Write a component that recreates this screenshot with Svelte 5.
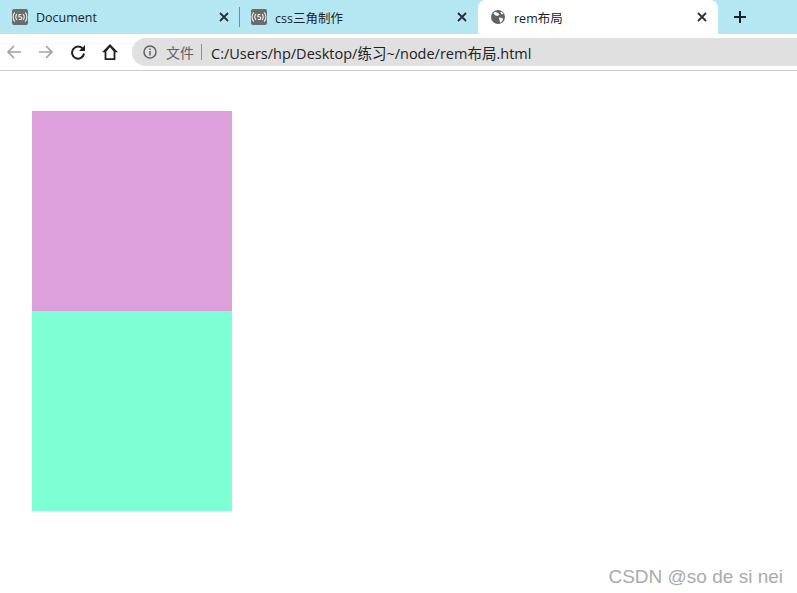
<script>
  const tabs = [
    { title: 'Document', icon: 'cast', active: false },
    { title: 'css三角制作', icon: 'cast', active: false },
    { title: 'rem布局', icon: 'globe', active: true }
  ];
</script>

<div class="browser">
  <div class="tabstrip">
    {#each tabs as tab, i}
      <div class="tab" class:active={tab.active} class:sep={i === 0}>
        {#if tab.icon === 'cast'}
          <svg class="favicon" width="16" height="16" viewBox="0 0 16 16">
            <rect width="16" height="16" rx="2" fill="#6b6b6b" />
            <g fill="none" stroke="#eee" stroke-width="1.100">
              <path d="M2.800 3.400a7 7 0 0 0 0 9.200M13.200 3.400a7 7 0 0 1 0 9.200" />
              <path d="M4.900 5.200a4.400 4.400 0 0 0 0 5.600M11.100 5.200a4.400 4.400 0 0 1 0 5.600" />
              <path d="M9.300 5.500H7.100L6.900 7.800H8.400a1.300 1.300 0 0 1 0 2.700H6.800" />
            </g>
          </svg>
        {:else}
          <svg class="favicon" width="16" height="16" viewBox="0 0 16 16">
            <circle cx="8" cy="8" r="7" fill="#5f6368" />
            <path d="M5 2.800l3 1.200 1.500 1.600-2 1.400-2-.4-2.200-2zM9 8.500l3.500.5.500 2-2.500 3-1-2.500zM11 2.500l2.500 2-1.500 1-1.500-1.500z" fill="#fff" />
          </svg>
        {/if}
        <span class="title">{tab.title}</span>
        <svg class="close" width="10" height="10" viewBox="0 0 10 10">
          <path d="M1 1l8 8M9 1l-8 8" stroke="#2b2e33" stroke-width="1.800" fill="none" />
        </svg>
      </div>
    {/each}
    <svg class="newtab" width="12" height="12" viewBox="0 0 12 12">
      <path d="M6 0v12M0 6h12" stroke="#202124" stroke-width="2" fill="none" />
    </svg>
  </div>

  <div class="toolbar">
    <svg class="nav" width="16" height="16" viewBox="0 0 16 16">
      <path d="M15 8H2M8 2L2 8l6 6" stroke="#a3a3a3" stroke-width="1.700" fill="none" />
    </svg>
    <svg class="nav" width="16" height="16" viewBox="0 0 16 16">
      <path d="M1 8h13M8 2l6 6-6 6" stroke="#a3a3a3" stroke-width="1.700" fill="none" />
    </svg>
    <svg class="nav" width="16" height="16" viewBox="0 0 16 16">
      <path d="M13 5.200A6 6 0 1 0 14 9.500" stroke="#202124" stroke-width="2" fill="none" />
      <path d="M15 1v6H9z" fill="#202124" />
    </svg>
    <svg class="nav" width="16" height="16" viewBox="0 0 16 16">
      <path d="M8 0L0 8.300h2.600V16h10.800V8.300H16zM4.400 14.200V7.500L8 3.300l3.600 4.200v6.700z" fill="#202124" fill-rule="evenodd" />
    </svg>
    <div class="omnibox">
      <svg class="info" width="14" height="14" viewBox="0 0 14 14">
        <circle cx="7" cy="7" r="6" fill="none" stroke="#5f6368" stroke-width="1.500" />
        <path d="M7 6v4.500M7 3.500v1.500" stroke="#5f6368" stroke-width="1.500" />
      </svg>
      <span class="scheme">文件</span>
      <span class="divider"></span>
      <span class="url">C:/Users/hp/Desktop/练习~/node/rem布局.html</span>
    </div>
  </div>

  <div class="page">
    <div class="box plum"></div>
    <div class="box aqua"></div>
  </div>

  <div class="watermark">CSDN @so de si nei</div>
</div>

<style>
  :global(body) {
    margin: 0;
    background: #fff;
  }

  .browser {
    position: relative;
    width: 797px;
    height: 593px;
    overflow: hidden;
    font-family: "Liberation Sans", "Noto Sans CJK SC", sans-serif;
  }

  .tabstrip {
    display: flex;
    align-items: stretch;
    height: 34px;
    background: #b5e7f3;
  }

  .tab {
    position: relative;
    display: flex;
    align-items: center;
    width: 238px;
    box-sizing: border-box;
    padding: 0 11px;
    font-size: 12.5px;
    color: #202124;
  }

  .tab.sep {
    width: 240px;
    padding-left: 12px;
  }

  .tab.sep::after {
    content: "";
    position: absolute;
    right: 0;
    top: 7px;
    height: 20px;
    width: 1px;
    background: #6f8f98;
  }

  .tab.active {
    width: 240px;
    padding-left: 12px;
    padding-right: 11px;
    background: #fff;
    border-radius: 8px 8px 0 0;
  }

  .favicon {
    flex: none;
  }

  .title {
    flex: 1;
    margin-left: 8px;
    white-space: nowrap;
    font-family: "Open Sans", "Noto Sans CJK SC", sans-serif;
  }

  .close {
    flex: none;
  }

  .newtab {
    margin: 11px 0 0 16px;
  }

  .toolbar {
    display: flex;
    align-items: center;
    height: 36px;
    border-bottom: 1px solid #cccccc;
    background: #fff;
  }

  .nav {
    flex: none;
    margin-left: 6px;
    margin-right: 10px;
  }

  .omnibox {
    flex: 1;
    display: flex;
    align-items: center;
    height: 28px;
    margin-left: 4px;
    padding-left: 11px;
    background: #e0e0e0;
    border-radius: 14px 0 0 14px;
    font-size: 14px;
  }

  .scheme {
    margin-left: 9px;
    color: #5f6368;
  }

  .divider {
    width: 1px;
    height: 16px;
    margin: 0 9px 0 7px;
    background: #8f8f8f;
  }

  .url {
    color: #202124;
    white-space: nowrap;
    font-size: 14.5px;
    font-family: "Open Sans", "Noto Sans CJK SC", sans-serif;
  }

  .page {
    padding: 40px 32px 0;
  }

  .box {
    width: 200px;
    height: 200px;
  }

  .plum {
    background: #dda0dd;
  }

  .aqua {
    background: #7fffd4;
  }

  .watermark {
    position: absolute;
    right: 14px;
    top: 566px;
    font-size: 19px;
    color: #ababab;
    white-space: nowrap;
  }
</style>
